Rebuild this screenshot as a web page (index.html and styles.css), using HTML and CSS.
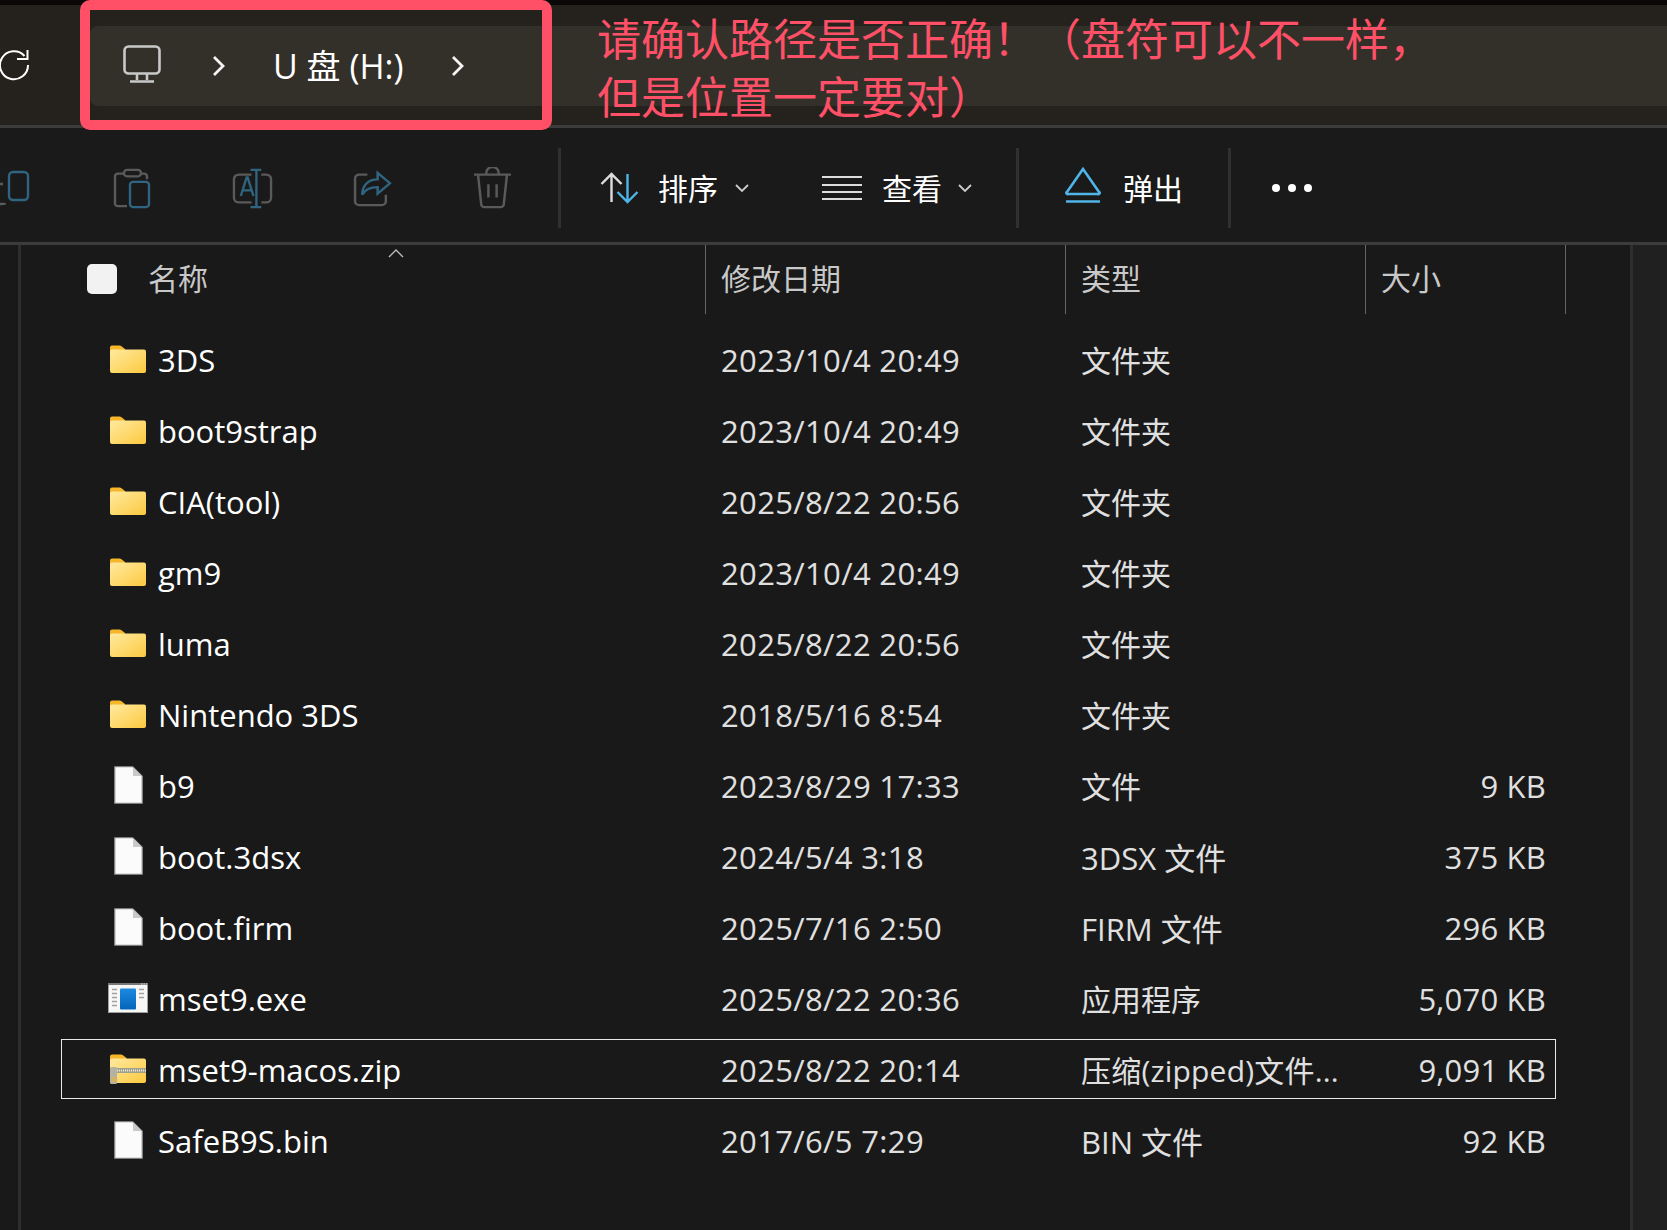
FILE: index.html
```html
<!DOCTYPE html>
<html lang="zh-CN">
<head>
    <meta charset="UTF-8">
    <meta name="viewport" content="width=device-width, initial-scale=1.0">
    <title>U 盘 (H:)</title>
    <link rel="stylesheet" href="styles.css">
</head>
<body>
    <svg class="icon-defs" width="0" height="0">
        <defs>
            <linearGradient id="folder-fill" x1="0" y1="0" x2="1" y2="1">
                <stop offset="0" stop-color="#ffeaa0"/>
                <stop offset="1" stop-color="#fcc93f"/>
            </linearGradient>
            <linearGradient id="exe-fill" x1="0" y1="0" x2="0" y2="1">
                <stop offset="0" stop-color="#1a8ae0"/>
                <stop offset="1" stop-color="#0664bb"/>
            </linearGradient>
            <symbol id="i-folder" viewBox="0 0 36 28">
                <path d="M0 2.500A2 2 0 0 1 2 .5h7.500a3 3 0 0 1 2 .8L15 4v3H0z" fill="#f5b62a"/>
                <path d="M0 6.500Q0 4.500 2 4.500h32a2 2 0 0 1 2 2V26a2 2 0 0 1-2 2H2a2 2 0 0 1-2-2z" fill="url(#folder-fill)"/>
            </symbol>
            <symbol id="i-file" viewBox="0 0 29 38">
                <path d="M.75.75h18l9.500 9.500v27h-27.500z" fill="#fbfbfb" stroke="#8a8a8a" stroke-width="1.200"/>
                <path d="M19 1v9h9z" fill="#c9c9c9"/>
            </symbol>
            <symbol id="i-exe" viewBox="0 0 40 30">
                <rect x=".5" y=".5" width="39" height="29" fill="#f7f7f7" stroke="#a0a0a0"/>
                <rect x="0" y="0" width="40" height="2" fill="#777"/>
                <path d="M33 1h1.500M35.500 1H37M38 1h1" stroke="#ddd" fill="none"/>
                <rect x="12" y="5.500" width="16" height="21" rx="1" fill="url(#exe-fill)"/>
                <path d="M4 6.500h5M4 10.500h5M4 14.500h5M4 18.500h5M4 22.500h5M31 6.500h5M31 10.500h5M31 14.500h5" stroke="#a0a0a0" stroke-width="1.300" fill="none"/>
            </symbol>
            <symbol id="i-zip" viewBox="0 0 37 30">
                <path d="M1 2.500A2 2 0 0 1 3 .5h9a3 3 0 0 1 2 .8L17.500 4v3H1z" fill="#f5b62a"/>
                <path d="M1 6.500Q1 4.500 3 4.500h32a2 2 0 0 1 2 2V27a2 2 0 0 1-2 2H3a2 2 0 0 1-2-2z" fill="url(#folder-fill)"/>
                <rect x="1" y="14" width="36" height="5" fill="#a09e8c"/>
                <path d="M8 16.500h29" stroke="#ece9d8" stroke-width="2" stroke-dasharray="1 1" fill="none"/>
                <rect x="1" y="13" width="7" height="17" rx="1.500" fill="#b5b2a0"/>
                <rect x="2.500" y="23" width="4" height="5" fill="#d8b35a"/>
            </symbol>
        </defs>
    </svg>

    <div class="window">
        <div class="top-bar">
            <svg class="refresh-icon" viewBox="0 0 30 32" width="30" height="32" fill="none" stroke="#fff" stroke-width="2">
                <path d="M24.500 7A14 14 0 1 0 28 16"/>
                <path d="M17 10h10.500V1"/>
            </svg>
            <div class="address-bar">
                <svg class="pc-icon" viewBox="0 0 38 38" width="38" height="38" fill="none" stroke="#c9c9c9" stroke-width="2.600">
                    <rect x="1.500" y="1.500" width="35" height="27" rx="4"/>
                    <path d="M14 29v6M24 29v6M7 36.500h24"/>
                </svg>
                <svg class="crumb-sep" viewBox="0 0 14 22" width="14" height="22" fill="none" stroke="#f4f4f4" stroke-width="2.800"><path d="M2 2l9 9-9 9"/></svg>
                <span class="crumb">U 盘 (H:)</span>
                <svg class="crumb-sep" viewBox="0 0 14 22" width="14" height="22" fill="none" stroke="#f4f4f4" stroke-width="2.800"><path d="M2 2l9 9-9 9"/></svg>
            </div>
        </div>

        <div class="toolbar">
            <div class="tool-btn tool-first">
                <svg viewBox="0 0 30 36" width="30" height="36" fill="none" stroke-width="2.400">
                    <rect x="9" y="2" width="19" height="28" rx="4" stroke="#2f6580"/>
                    <path d="M0 14h3M5 33q0 1-3 1H0" stroke="#5a5a5a"/>
                </svg>
            </div>
            <div class="tool-btn">
                <svg viewBox="0 0 38 44" width="38" height="41" preserveAspectRatio="none" fill="none" stroke-width="2.400">
                    <path d="M10 6H5a3 3 0 0 0-3 3v29a3 3 0 0 0 3 3h9M29 6h2a3 3 0 0 1 3 3v3" stroke="#5a5a5a"/>
                    <rect x="11" y="2" width="17" height="7" rx="3" stroke="#5a5a5a"/>
                    <rect x="17" y="15" width="19" height="27" rx="3" stroke="#2f6580"/>
                </svg>
            </div>
            <div class="tool-btn">
                <svg viewBox="0 0 42 44" width="41" height="41" preserveAspectRatio="none" fill="none" stroke-width="2.400">
                    <path d="M20 7H7a5 5 0 0 0-5 5v20a5 5 0 0 0 5 5h13M30 7h5a5 5 0 0 1 5 5v20a5 5 0 0 1-5 5h-5" stroke="#5a5a5a"/>
                    <path d="M19 2h11M19 42h11M25 2v40M9 30l6-20h1l6 20M11 24h9" stroke="#2f6580"/>
                </svg>
            </div>
            <div class="tool-btn">
                <svg viewBox="0 0 38 40" width="39" height="38" preserveAspectRatio="none" fill="none" stroke-width="2.400">
                    <path d="M14 6H6a4 4 0 0 0-4 4v24a4 4 0 0 0 4 4h22a4 4 0 0 0 4-4v-7" stroke="#5a5a5a"/>
                    <path d="M24 4v7c-9 0-15 6-15 16 3-6 8-8 15-8v7l12-11z" stroke="#2f6580"/>
                </svg>
            </div>
            <div class="tool-btn">
                <svg viewBox="0 0 38 44" width="39" height="42" preserveAspectRatio="none" fill="none" stroke="#5a5a5a" stroke-width="2.400">
                    <path d="M1 8h36M13 8V6a4 4 0 0 1 12 0v2M5 9l3 30a3 3 0 0 0 3 3h16a3 3 0 0 0 3-3l3-30M15 18v14M23 18v14"/>
                </svg>
            </div>
            <div class="tool-sep"></div>

            <div class="tool-item item-sort">
                <svg viewBox="0 0 40 32" width="41" height="32" fill="none" stroke-width="2.400">
                    <path d="M12 30V2M2 12 12 2l10 10" stroke="#ddd"/>
                    <path d="M28 2v28M18 20l10 10 10-10" stroke="#4fb4e8"/>
                </svg>
                <span>排序</span>
                <svg class="caret" viewBox="0 0 14 9" width="14" height="9" fill="none" stroke="#ccc" stroke-width="1.800"><path d="M1 1l6 6 6-6"/></svg>
            </div>
            <div class="tool-item item-view">
                <svg viewBox="0 0 40 26" width="40" height="26" fill="none" stroke="#ddd" stroke-width="2.200">
                    <path d="M0 2h40M0 10h40M0 17h40M0 24h40"/>
                </svg>
                <span>查看</span>
                <svg class="caret" viewBox="0 0 14 9" width="14" height="9" fill="none" stroke="#ccc" stroke-width="1.800"><path d="M1 1l6 6 6-6"/></svg>
            </div>
            <div class="tool-sep sep-view"></div>
            <div class="tool-item item-eject">
                <svg class="eject-icon" viewBox="0 0 36 36" width="36" height="36" fill="none" stroke="#4fb4e8" stroke-width="2.600">
                    <path d="M18 2 2 25a1 1 0 0 0 1 2h30a1 1 0 0 0 1-2z"/>
                    <path d="M1 34.500h34"/>
                </svg>
                <span>弹出</span>
            </div>
            <div class="tool-sep sep-eject"></div>
            <div class="dots"><i></i><i></i><i></i></div>
        </div>

        <div class="list-area">
            <div class="list-pane">
                <div class="list-head">
                    <div class="head-cell head-name">
                        <span class="check"></span>
                        <span>名称</span>
                        <svg class="sort-caret" viewBox="0 0 16 9" width="16" height="9" fill="none" stroke="#bbb" stroke-width="1.400"><path d="M1 8l7-7 7 7"/></svg>
                    </div>
                    <div class="head-cell">修改日期</div>
                    <div class="head-cell">类型</div>
                    <div class="head-cell">大小</div>
                </div>

                <div class="rows">
                    <div class="row"><div class="name"><svg class="ic ic-folder"><use href="#i-folder"/></svg><span>3DS</span></div><div class="date">2023/10/4 20:49</div><div class="type">文件夹</div><div class="size"></div></div>
                    <div class="row"><div class="name"><svg class="ic ic-folder"><use href="#i-folder"/></svg><span>boot9strap</span></div><div class="date">2023/10/4 20:49</div><div class="type">文件夹</div><div class="size"></div></div>
                    <div class="row"><div class="name"><svg class="ic ic-folder"><use href="#i-folder"/></svg><span>CIA(tool)</span></div><div class="date">2025/8/22 20:56</div><div class="type">文件夹</div><div class="size"></div></div>
                    <div class="row"><div class="name"><svg class="ic ic-folder"><use href="#i-folder"/></svg><span>gm9</span></div><div class="date">2023/10/4 20:49</div><div class="type">文件夹</div><div class="size"></div></div>
                    <div class="row"><div class="name"><svg class="ic ic-folder"><use href="#i-folder"/></svg><span>luma</span></div><div class="date">2025/8/22 20:56</div><div class="type">文件夹</div><div class="size"></div></div>
                    <div class="row"><div class="name"><svg class="ic ic-folder"><use href="#i-folder"/></svg><span>Nintendo 3DS</span></div><div class="date">2018/5/16 8:54</div><div class="type">文件夹</div><div class="size"></div></div>
                    <div class="row"><div class="name"><svg class="ic ic-file"><use href="#i-file"/></svg><span>b9</span></div><div class="date">2023/8/29 17:33</div><div class="type">文件</div><div class="size">9 KB</div></div>
                    <div class="row"><div class="name"><svg class="ic ic-file"><use href="#i-file"/></svg><span>boot.3dsx</span></div><div class="date">2024/5/4 3:18</div><div class="type type-latin">3DSX 文件</div><div class="size">375 KB</div></div>
                    <div class="row"><div class="name"><svg class="ic ic-file"><use href="#i-file"/></svg><span>boot.firm</span></div><div class="date">2025/7/16 2:50</div><div class="type type-latin">FIRM 文件</div><div class="size">296 KB</div></div>
                    <div class="row"><div class="name"><svg class="ic ic-exe"><use href="#i-exe"/></svg><span>mset9.exe</span></div><div class="date">2025/8/22 20:36</div><div class="type">应用程序</div><div class="size">5,070 KB</div></div>
                    <div class="row selected"><div class="name"><svg class="ic ic-zip"><use href="#i-zip"/></svg><span>mset9-macos.zip</span></div><div class="date">2025/8/22 20:14</div><div class="type type-zip">压缩(zipped)文件...</div><div class="size">9,091 KB</div></div>
                    <div class="row"><div class="name"><svg class="ic ic-file"><use href="#i-file"/></svg><span>SafeB9S.bin</span></div><div class="date">2017/6/5 7:29</div><div class="type type-latin">BIN 文件</div><div class="size">92 KB</div></div>
                </div>
            </div>
            <div class="side-pane"></div>
        </div>
    </div>

    <!-- annotation drawn on top of the screenshot -->
    <div class="mark-box"></div>
    <div class="mark-text">请确认路径是否正确！（盘符可以不一样，<br>但是位置一定要对）</div>
</body>
</html>
```

FILE: styles.css
```css
* {
    margin: 0;
    padding: 0;
    box-sizing: border-box;
}

body {
    background-color: #191919;
    font-family: "Open Sans", "Noto Sans CJK SC", sans-serif;
    font-size: 30px;
    color: #f5f5f5;
    width: 1667px;
    height: 1230px;
    overflow: hidden;
    position: relative;
}

.icon-defs {
    position: absolute;
}

.top-bar {
    height: 128px;
    background-color: #25221d;
    border-top: 5px solid #0a0806;
    border-bottom: 3px solid #3c3c3c;
    display: flex;
    align-items: center;
}

.refresh-icon {
    flex: none;
}

.address-bar {
    flex: 1;
    height: 80px;
    margin-left: 60px;
    margin-top: 2px;
    padding-left: 33px;
    padding-bottom: 4px;
    background-color: #33302a;
    border-radius: 8px 0 0 8px;
    display: flex;
    align-items: center;
}

.crumb-sep {
    margin-left: 51px;
    margin-top: 4px;
    flex: none;
}

.crumb {
    margin-left: 47px;
    width: 131px;
    white-space: nowrap;
    font-size: 34px;
    color: #fff;
}

.crumb + .crumb-sep {
    margin-left: 47px;
}

.toolbar {
    height: 117px;
    padding-top: 6px;
    background-color: #1a1a1a;
    border-bottom: 3px solid #3c3c3c;
    display: flex;
    align-items: center;
}

.tool-btn {
    width: 120px;
    display: flex;
    justify-content: center;
}

.tool-first {
    width: 72px;
    justify-content: flex-start;
}

.tool-sep {
    width: 3px;
    height: 80px;
    margin-left: 6px;
    background-color: #303030;
}

.tool-item {
    display: flex;
    align-items: center;
    color: #fff;
}

.tool-item span {
    margin-left: 20px;
    margin-bottom: 2px;
}

.item-sort {
    margin-left: 38px;
}

.item-sort span {
    margin-left: 18px;
}

.item-sort .caret {
    margin-left: 17px;
}

.item-view {
    margin-left: 73px;
}

.item-eject {
    margin-left: 46px;
}

.item-eject span {
    margin-left: 22px;
}

.eject-icon {
    margin-top: -6px;
}

.caret {
    margin-left: 16px;
}

.sep-view {
    margin-left: 44px;
}

.sep-eject {
    margin-left: 45px;
}

.dots {
    display: flex;
    gap: 8px;
    margin-left: 41px;
}

.dots i {
    width: 8px;
    height: 8px;
    border-radius: 50%;
    background-color: #fff;
}

.list-area {
    height: 985px;
    display: flex;
}

.list-pane {
    flex: 1;
    margin-left: 18px;
    border-left: 3px solid #2e2e2e;
    border-right: 3px solid #2e2e2e;
    padding-left: 41px;
}

.side-pane {
    width: 34px;
    background-color: #202020;
}

.list-head {
    height: 69px;
    display: grid;
    grid-template-columns: 644px 360px 300px 200px;
    color: #c8c8c8;
}

.head-cell {
    display: flex;
    align-items: center;
    padding-left: 15px;
    padding-bottom: 6px;
    border-right: 1px solid #666;
    position: relative;
}

.head-name {
    padding-left: 25px;
}

.check {
    width: 30px;
    height: 30px;
    margin-right: 31px;
    margin-top: 4px;
    border-radius: 5px;
    background-color: #f2f2f2;
}

.sort-caret {
    position: absolute;
    left: 326px;
    top: 4px;
}

.rows {
    padding-top: 15px;
    margin-left: -1px;
    width: 1495px;
    display: flex;
    flex-direction: column;
    gap: 11px;
}

.row {
    height: 60px;
    display: grid;
    grid-template-columns: 659px 360px 300px 1fr;
    align-items: center;
    color: #e0e0e0;
    font-size: 31px;
    border: 1px solid transparent;
    white-space: nowrap;
}

.row.selected {
    border-color: #e8e8e8;
}

.name {
    display: flex;
    align-items: center;
    color: #fff;
}

.name span,
.date,
.size {
    padding-top: 2px;
}

.date {
    letter-spacing: 0.35px;
}

.type {
    font-size: 30px;
}

.type-latin {
    font-size: 31px;
}

.type-zip {
    letter-spacing: 0.2px;
}

.ic {
    flex: none;
}

.ic-folder {
    width: 36px;
    height: 28px;
    margin-left: 48px;
    margin-right: 12px;
}

.ic-file {
    width: 29px;
    height: 38px;
    margin-left: 52px;
    margin-right: 15px;
}

.ic-exe {
    width: 40px;
    height: 30px;
    margin-left: 46px;
    margin-right: 10px;
}

.ic-zip {
    width: 37px;
    height: 30px;
    margin-left: 47px;
    margin-right: 12px;
}

.size {
    text-align: right;
    padding-right: 9px;
    letter-spacing: 0.2px;
}

.mark-box {
    position: absolute;
    left: 80px;
    top: 0;
    width: 472px;
    height: 130px;
    border: 10px solid #ff5068;
    border-radius: 10px;
}

.mark-text {
    position: absolute;
    left: 597px;
    top: 10px;
    font-size: 44px;
    line-height: 58px;
    color: #ff5068;
    white-space: nowrap;
}
```
